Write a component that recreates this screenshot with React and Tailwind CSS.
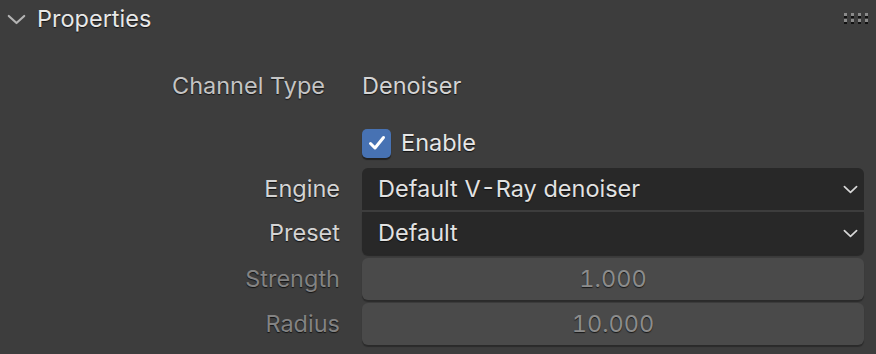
import React from "react";

const shadow = "[text-shadow:0_1px_1px_rgba(0,0,0,0.7)]";

function Chevron({ className }) {
  return (
    <svg viewBox="0 0 16 9" className={className} fill="none">
      <path d="M1.5 1.5 L8 7.5 L14.5 1.5" stroke="currentColor" strokeWidth="1.8" strokeLinecap="round" strokeLinejoin="round" />
    </svg>
  );
}

function Grip() {
  const dots = [0, 1, 2, 3];
  return (
    <div className="flex flex-col gap-[3px]">
      {[0, 1].map((r) => (
        <div key={r} className="flex gap-[4px]">
          {dots.map((d) => (
            <div key={d} className="w-[3px] h-[3px] bg-[#8a8a8a] shadow-[0_2px_0_#111]" />
          ))}
        </div>
      ))}
    </div>
  );
}

function Label({ children, disabled }) {
  return (
    <div
      className={`w-[340px] shrink-0 text-right ${shadow} ${
        disabled ? "text-[#838383]" : "text-[#d4d4d4]"
      }`}
    >
      {children}
    </div>
  );
}

export default function App() {
  return (
    <div
      className="w-[876px] h-[354px] bg-[#3d3d3d] overflow-hidden text-[23.5px] leading-none"
      style={{ fontFamily: "Inter, 'Noto Sans', sans-serif" }}
    >
      {/* Header */}
      <div className="h-[38px] flex items-center pl-[7px] pr-[8px]">
        <Chevron className="w-[19px] h-[11px] text-[#b4b4b4] mt-[1px]" />
        <span className={`ml-[11px] text-[23.5px] text-[#e8e8e8] ${shadow}`}>Properties</span>
        <div className="ml-auto mb-[4px]">
          <Grip />
        </div>
      </div>

      <div className="flex flex-col pr-[12px]">
        {/* Channel type */}
        <div className="flex items-center h-[40px] mt-[28px]">
          <div className={`w-[325px] shrink-0 text-right text-[#c4c4c4] ${shadow}`}>Channel Type</div>
          <div className={`ml-[37px] text-[#d4d4d4] ${shadow}`}>Denoiser</div>
        </div>

        {/* Enable */}
        <div className="flex items-center h-[30px] mt-[22px] pl-[362px]">
          <div className="w-[29px] h-[29px] rounded-[5px] bg-[#4772b3] shadow-[0_2px_1px_rgba(0,0,0,0.45)] flex items-center justify-center">
            <svg viewBox="0 0 20 20" className="w-[20px] h-[20px]" fill="none">
              <path d="M3.5 10.5 L8 15 L16.5 4.5" stroke="white" strokeWidth="3" strokeLinecap="round" strokeLinejoin="round" />
            </svg>
          </div>
          <span className={`ml-[10px] text-[#e6e6e6] ${shadow}`}>Enable</span>
        </div>

        {/* Engine / Preset */}
        <div className="flex flex-col gap-[2px] mt-[10px]">
          <div className="flex items-center h-[42px]">
            <Label>Engine</Label>
            <div className="ml-[22px] flex-1 h-full rounded-t-[6px] bg-[#282828] flex items-center pl-[16px] pr-[6px]">
              <span className={`text-[#e2e2e2] ${shadow}`}>Default V{"\u200A"}-{"\u200A"}Ray denoiser</span>
              <Chevron className="ml-auto w-[15px] h-[9px] text-[#d8d8d8]" />
            </div>
          </div>
          <div className="flex items-center h-[42px]">
            <Label>Preset</Label>
            <div className="ml-[22px] flex-1 h-full rounded-b-[6px] bg-[#282828] shadow-[0_2px_1px_rgba(0,0,0,0.35)] flex items-center pl-[16px] pr-[6px]">
              <span className={`text-[#e2e2e2] ${shadow}`}>Default</span>
              <Chevron className="ml-auto w-[15px] h-[9px] text-[#d8d8d8]" />
            </div>
          </div>
        </div>

        {/* Strength / Radius */}
        <div className="flex flex-col gap-[3px] mt-[4px]">
          <div className="flex items-center h-[42px]">
            <Label disabled>Strength</Label>
            <div className="ml-[22px] flex-1 h-full rounded-[6px] bg-[#4a4a4a] shadow-[0_2px_1px_rgba(0,0,0,0.3)] flex items-center justify-center">
              <span className={`text-[#8c8c8c] tabular-nums ${shadow}`}>1.000</span>
            </div>
          </div>
          <div className="flex items-center h-[42px]">
            <Label disabled>Radius</Label>
            <div className="ml-[22px] flex-1 h-full rounded-[6px] bg-[#4a4a4a] shadow-[0_2px_1px_rgba(0,0,0,0.3)] flex items-center justify-center">
              <span className={`text-[#8c8c8c] tabular-nums ${shadow}`}>10.000</span>
            </div>
          </div>
        </div>
      </div>
    </div>
  );
}
